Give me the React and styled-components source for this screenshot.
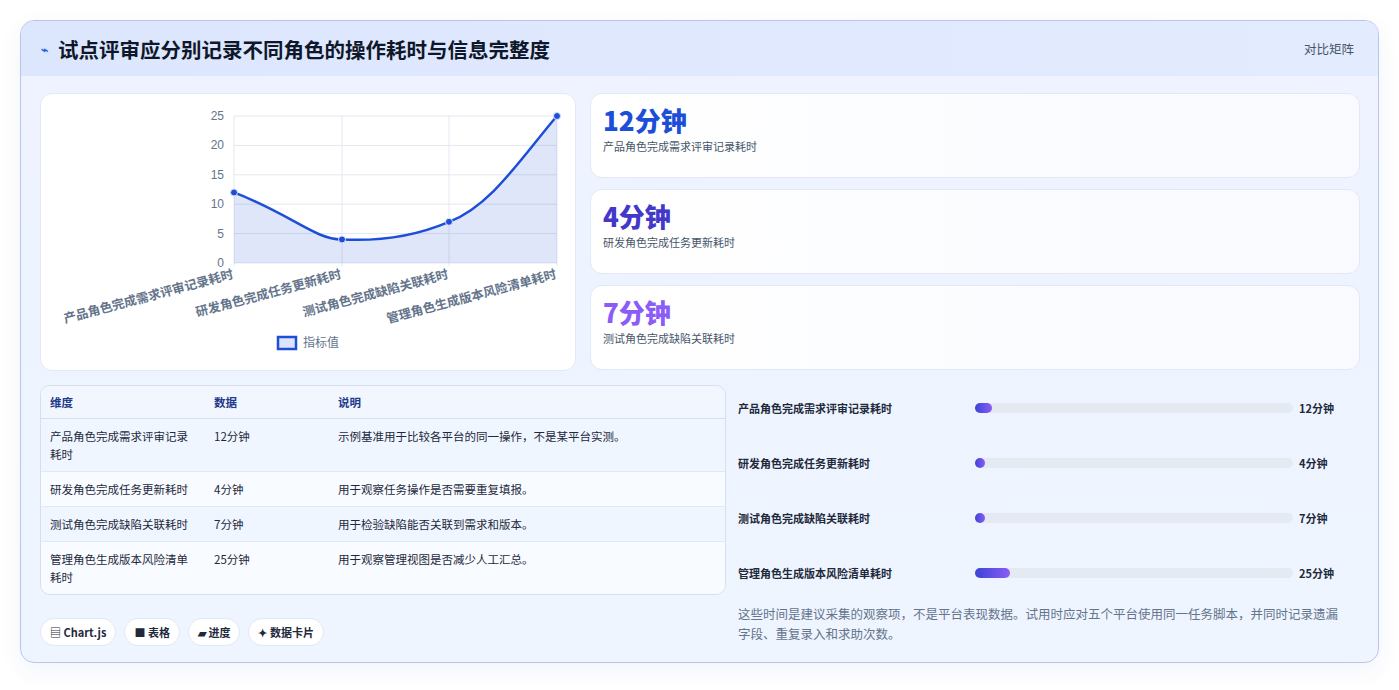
import React from 'react'
import styled, { createGlobalStyle } from 'styled-components'

const GlobalStyle = createGlobalStyle`
  body {
    margin: 0;
    background: #ffffff;
    font-family: "Noto Sans CJK SC", "Noto Sans", sans-serif;
    color: #1e293b;
  }
`

const rows = [
  { name: '产品角色完成需求评审记录耗时', value: 12, note: '示例基准用于比较各平台的同一操作，不是某平台实测。' },
  { name: '研发角色完成任务更新耗时', value: 4, note: '用于观察任务操作是否需要重复填报。' },
  { name: '测试角色完成缺陷关联耗时', value: 7, note: '用于检验缺陷能否关联到需求和版本。' },
  { name: '管理角色生成版本风险清单耗时', value: 25, note: '用于观察管理视图是否减少人工汇总。' }
]

const statColors = ['#1d4ed8', '#4338ca', '#8b5cf6']

const Page = styled.div`
  padding: 20px 20px 22px 20px;
`

const Card = styled.div`
  border: 1px solid #b9c6ea;
  border-radius: 14px;
  background: linear-gradient(180deg, #eef3ff 0%, #eef5ff 100%);
  overflow: hidden;
  box-shadow: 0 8px 24px rgba(30, 64, 175, 0.06);
`

const Header = styled.div`
  height: 55px;
  display: flex;
  align-items: center;
  justify-content: space-between;
  padding: 0 20px;
  background: linear-gradient(90deg, #dce6fd 0%, #e3ebfe 100%);
`

const Title = styled.h1`
  margin: 0;
  font-size: 20.5px;
  font-weight: 700;
  color: #0f172a;
  display: flex;
  align-items: center;
  gap: 10px;
`

const Bolt = styled.span`
  color: #2563eb;
  font-size: 12px;
`

const HeaderTag = styled.span`
  font-size: 12.5px;
  color: #475569;
  margin-right: 4px;
`

const Body = styled.div`
  padding: 17px 18px 16px 19px;
  display: grid;
  grid-template-columns: 536px 1fr;
  gap: 14px;
`

const White = styled.div`
  background: #ffffff;
  border: 1px solid #e2e8f4;
  border-radius: 12px;
`

const ChartBox = styled(White)`
  height: 276px;
`

const Stats = styled.div`
  display: flex;
  flex-direction: column;
  gap: 11px;
`

const Stat = styled(White)`
  height: 85px;
  box-sizing: border-box;
  padding: 9px 12px;
  background: linear-gradient(90deg, #ffffff 0%, #f8faff 100%);
`

const StatValue = styled.div`
  font-size: 26px;
  font-weight: 800;
  line-height: 34px;
  color: ${p => p.$color};
`

const StatLabel = styled.div`
  font-size: 11px;
  color: #475569;
  margin-top: 1px;
`

const Bottom = styled.div`
  grid-column: 1 / -1;
  display: grid;
  grid-template-columns: 686px 1fr;
  gap: 12px;
`

const Left = styled.div`
  display: flex;
  flex-direction: column;
`

const Table = styled.table`
  width: 100%;
  border-collapse: separate;
  border-spacing: 0;
  border: 1px solid #d6def0;
  border-radius: 10px;
  overflow: hidden;
  font-size: 11.5px;
  background: #f8fbff;
`

const Th = styled.th`
  text-align: left;
  font-weight: 700;
  color: #1e3a8a;
  height: 32px;
  padding: 0 9px;
  border-bottom: 1px solid #d6def0;
  background: #f2f6ff;
`

const Tr = styled.tr`
  background: ${p => (p.$alt ? '#f0f6ff' : '#f8fbff')};
  td {
    border-top: ${p => (p.$first ? 'none' : '1px solid #e3e9f4')};
  }
`

const Td = styled.td`
  padding: 8px 9px;
  vertical-align: top;
  line-height: 18px;
  color: #1e293b;
  width: ${p => p.$w || 'auto'};
`

const Chips = styled.div`
  display: flex;
  gap: 8px;
  margin-top: 23px;
`

const Chip = styled.span`
  font-size: 11px;
  font-weight: 600;
  color: #1e293b;
  background: #ffffff;
  border: 1px solid #e2e8f4;
  border-radius: 14px;
  padding: 5px 9px;
`

const Right = styled.div``

const BarRow = styled.div`
  display: grid;
  grid-template-columns: 231px 318px 1fr;
  gap: 6px;
  align-items: center;
  height: 55px;
  font-size: 11px;
  font-weight: 600;
  &:first-child { margin-top: -5px; }
`

const Track = styled.div`
  height: 10px;
  border-radius: 6px;
  background: #e5e9f2;
`

const Fill = styled.div`
  height: 100%;
  min-width: 10px;
  border-radius: 6px;
  background: linear-gradient(90deg, #3b45d6, #8b5cf6);
`

const Note = styled.p`
  margin: 4px 0 0;
  font-size: 12.5px;
  line-height: 20px;
  color: #64748b;
  padding-right: 20px;
`

const xs = [193, 301, 408, 516]
const yOf = v => 169 - v * 5.88

const Chart = () => {
  const pts = rows.map((r, i) => [xs[i], yOf(r.value)])
  const path = `M${pts[0][0]},${pts[0][1]} C250,${pts[0][1] + 22} 275,146 ${pts[1][0]},${pts[1][1]} C330,147 370,144 ${pts[2][0]},${pts[2][1]} C450,112 480,64 ${pts[3][0]},${pts[3][1]}`
  return (
    <svg width="536" height="276" style={{ display: 'block' }}>
      {[0, 5, 10, 15, 20, 25].map(v => (
        <g key={v}>
          <line x1="193" x2="516" y1={yOf(v)} y2={yOf(v)} stroke="#e2e8f0" />
          <text x="183" y={yOf(v) + 4} fontSize="12" fill="#64748b" textAnchor="end" fontFamily="Liberation Sans">{v}</text>
        </g>
      ))}
      {xs.map(x => <line key={x} x1={x} x2={x} y1={yOf(25)} y2={172} stroke="#e2e8f0" />)}
      <path d={`${path} L516,169 L193,169 Z`} fill="rgba(29,78,216,0.14)" />
      <path d={path} fill="none" stroke="#1d4ed8" strokeWidth="2.5" />
      {pts.map(([x, y]) => <circle key={x} cx={x} cy={y} r="3.5" fill="#1d4ed8" stroke="#dbe4fb" strokeWidth="1" />)}
      {rows.map((r, i) => (
        <text key={r.name} x={xs[i]} y={184} fontSize="12.5" fill="#64748b" fontWeight="600" textAnchor="end" transform={`rotate(-15 ${xs[i]} 184)`}>{r.name}</text>
      ))}
      <rect x="237" y="243" width="18" height="12" fill="#dbe4fb" stroke="#1d4ed8" strokeWidth="2.5" />
      <text x="262" y="253" fontSize="12" fill="#64748b">指标值</text>
    </svg>
  )
}

export default function App() {
  return (
    <Page>
      <GlobalStyle />
      <Card>
        <Header>
          <Title><Bolt>⌁</Bolt>试点评审应分别记录不同角色的操作耗时与信息完整度</Title>
          <HeaderTag>对比矩阵</HeaderTag>
        </Header>
        <Body>
          <ChartBox><Chart /></ChartBox>
          <Stats>
            {rows.slice(0, 3).map((r, i) => (
              <Stat key={r.name}>
                <StatValue $color={statColors[i]}>{r.value}分钟</StatValue>
                <StatLabel>{r.name}</StatLabel>
              </Stat>
            ))}
          </Stats>
          <Bottom>
            <Left>
              <Table>
                <thead>
                  <tr><Th>维度</Th><Th>数据</Th><Th>说明</Th></tr>
                </thead>
                <tbody>
                  {rows.map((r, i) => (
                    <Tr key={r.name} $alt={i % 2 === 0} $first={i === 0}>
                      <Td $w="146px">{r.name}</Td>
                      <Td $w="106px">{r.value}分钟</Td>
                      <Td>{r.note}</Td>
                    </Tr>
                  ))}
                </tbody>
              </Table>
              <Chips>
                <Chip>▤ Chart.js</Chip>
                <Chip>■ 表格</Chip>
                <Chip>▰ 进度</Chip>
                <Chip>✦ 数据卡片</Chip>
              </Chips>
            </Left>
            <Right>
              {rows.map(r => (
                <BarRow key={r.name}>
                  <span>{r.name}</span>
                  <Track><Fill style={{ width: `${r.value * 0.44}%` }} /></Track>
                  <span>{r.value}分钟</span>
                </BarRow>
              ))}
              <Note>这些时间是建议采集的观察项，不是平台表现数据。试用时应对五个平台使用同一任务脚本，并同时记录遗漏字段、重复录入和求助次数。</Note>
            </Right>
          </Bottom>
        </Body>
      </Card>
    </Page>
  )
}
